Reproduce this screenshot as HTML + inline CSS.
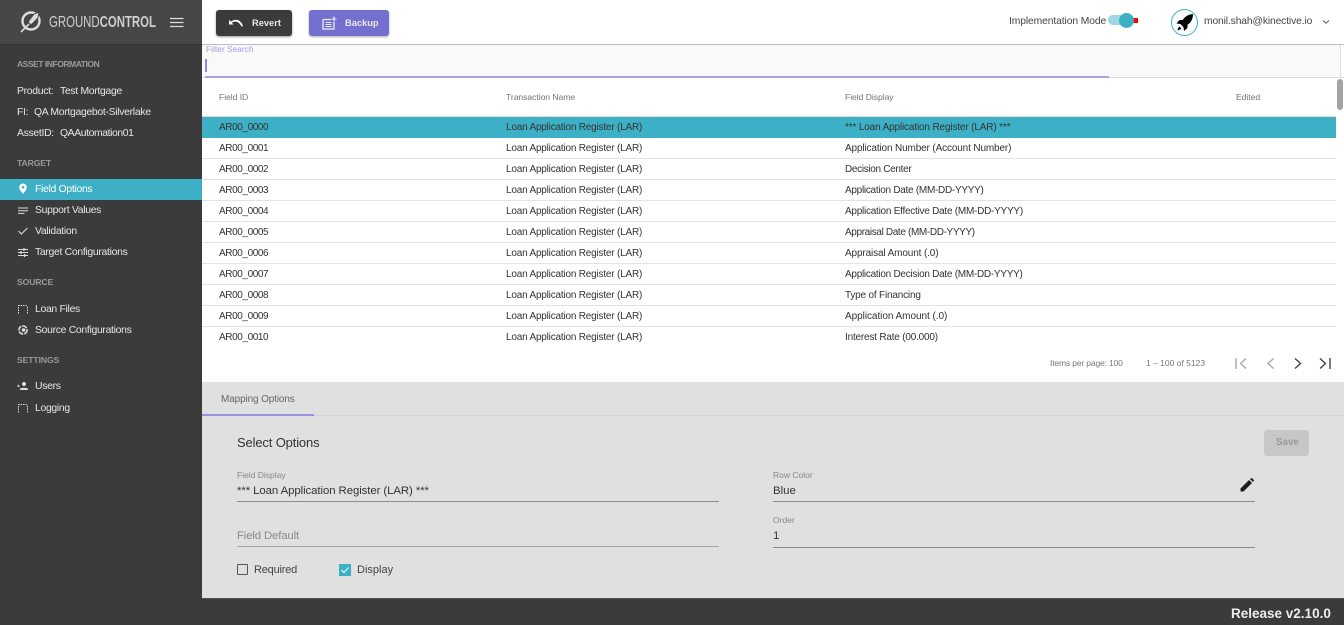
<!DOCTYPE html>
<html><head><meta charset="utf-8"><style>
html,body{margin:0;padding:0;width:1344px;height:625px;overflow:hidden;background:#fff;font-family:"Liberation Sans",sans-serif;color:#333}
.a{position:absolute;white-space:nowrap;line-height:14px}
.s{color:#e6e6e6;font-size:10.4px;letter-spacing:-.3px}
.h{color:#9a9a9a;font-size:8.6px;font-weight:bold;letter-spacing:-.1px}
.r{position:absolute;left:202px;width:1134px;height:20px;border-bottom:1px solid #e3e3e3;font-size:10px;color:#333}
.r span{position:absolute;top:4px;line-height:14px;white-space:nowrap}
.r .c1{left:17px;letter-spacing:-.4px}.r .c2{left:304px;letter-spacing:-.2px}.r .c3{left:643px;letter-spacing:-.25px}
.th{color:#757575;font-size:8.6px;letter-spacing:-.05px}
svg{position:absolute;display:block}
</style></head><body>
<div style="position:absolute;left:0;top:0;width:202px;height:625px;background:#3b3b3b"></div>
<div style="position:absolute;left:0;top:0;width:202px;height:45px;background:#464646;border-bottom:1px solid #333;box-sizing:border-box"></div>
<svg style="left:19px;top:10px" width="24" height="24" viewBox="0 0 24 24" fill="none"><circle cx="12" cy="11" r="8.5" stroke="#ddd" stroke-width="2.4"/><path d="M9 12 L15 4 L20 2 L19 8 L12 15 Z" fill="#ddd" stroke="#464646" stroke-width="1"/><path d="M2 22 L10 14" stroke="#ddd" stroke-width="1.6"/></svg>
<div class="a" style="left:49px;top:16px;font-size:15.5px;color:#cfcfcf;transform-origin:left;transform:scaleX(.735)">GROUND<b>CONTROL</b></div>
<svg style="left:170px;top:17px" width="14" height="12"><path d="M0 1.5H13.5M0 5.5H13.5M0 9.5H13.5" stroke="#ddd" stroke-width="1.2"/></svg>
<div class="a h" style="left:17px;top:57px;letter-spacing:-.52px">ASSET INFORMATION</div>
<div class="a s" style="left:17px;top:85px">Product:</div><div class="a s" style="left:60px;top:85px">Test Mortgage</div>
<div class="a s" style="left:17px;top:106px">FI:</div><div class="a s" style="left:34px;top:106px">QA Mortgagebot-Silverlake</div>
<div class="a s" style="left:17px;top:127px">AssetID:</div><div class="a s" style="left:60px;top:127px;letter-spacing:-.4px">QAAutomation01</div>
<div class="a h" style="left:17px;top:156px">TARGET</div>
<div style="position:absolute;left:0;top:179px;width:202px;height:21px;background:#3eb0c5"></div>
<svg style="left:18px;top:183px" width="10" height="11" viewBox="0 0 10 11"><path d="M5 .5A3.8 3.8 0 0 0 1.2 4.3C1.2 7 5 10.8 5 10.8S8.8 7 8.8 4.3A3.8 3.8 0 0 0 5 .5Z" fill="#fff"/><circle cx="5" cy="4.3" r="1.3" fill="#3eb0c5"/></svg>
<div class="a s" style="left:35px;top:183px;color:#fff">Field Options</div>
<svg style="left:18px;top:207px" width="10" height="8"><path d="M0 1H10M0 3.7H10M0 6.4H6.5" stroke="#ddd" stroke-width="1"/></svg>
<div class="a s" style="left:35px;top:204px">Support Values</div>
<svg style="left:18px;top:227px" width="10" height="8"><path d="M.5 4L3.3 7L9.5 1" stroke="#ddd" stroke-width="1.1" fill="none"/></svg>
<div class="a s" style="left:35px;top:225px">Validation</div>
<svg style="left:18px;top:248px" width="10" height="9"><path d="M0 1.5H10M0 4.5H10M0 7.5H10" stroke="#ddd" stroke-width="1"/><path d="M6 0V3M3 3V6M6.5 6V9" stroke="#ddd" stroke-width="1.3"/></svg>
<div class="a s" style="left:35px;top:246px">Target Configurations</div>
<div class="a h" style="left:17px;top:275px">SOURCE</div>
<svg style="left:18px;top:305px" width="10" height="9"><path d="M.5 8.5V.5H8L9.5 2V8.5" stroke="#ddd" stroke-dasharray="1.5 1" fill="none"/></svg>
<div class="a s" style="left:35px;top:303px">Loan Files</div>
<svg style="left:18px;top:325px" width="10" height="10"><circle cx="5" cy="5" r="4" fill="none" stroke="#ddd" stroke-width="1.6" stroke-dasharray="5 1"/><circle cx="5.5" cy="5" r="1.8" fill="#ddd"/></svg>
<div class="a s" style="left:35px;top:324px">Source Configurations</div>
<div class="a h" style="left:17px;top:353px">SETTINGS</div>
<svg style="left:17px;top:382px" width="11" height="8"><circle cx="7" cy="2" r="2" fill="#ddd"/><path d="M3 8C3 5.5 11 5.5 11 8ZM0 4H3M1.5 2.6V5.4" fill="#ddd" stroke="#ddd" stroke-width=".7"/></svg>
<div class="a s" style="left:35px;top:380px">Users</div>
<svg style="left:18px;top:404px" width="10" height="9"><path d="M.5 8.5V.5H8L9.5 2V8.5" stroke="#ddd" stroke-dasharray="1.5 1" fill="none"/></svg>
<div class="a s" style="left:35px;top:402px">Logging</div>

<div style="position:absolute;left:202px;top:44px;width:1142px;height:1px;background:#bdbdbd"></div>
<div style="position:absolute;left:216px;top:10px;width:76px;height:26px;background:#3b3b3b;border-radius:3px;box-shadow:0 1px 2px #999"></div>
<svg style="left:228px;top:18px" width="16" height="10"><path d="M1 2V6.5H5.5L3.8 4.8C7 2.6 11 3.5 13.5 8.5L15 8C12.8 1.5 7.5 0 2.9 3.6Z" fill="#fff"/></svg>
<div class="a" style="left:252px;top:16px;font-size:9.3px;font-weight:bold;color:#e8e8e8">Revert</div>
<div style="position:absolute;left:309px;top:10px;width:80px;height:26px;background:#7570d0;border-radius:3px;box-shadow:0 1px 2px #aaa"></div>
<svg style="left:322px;top:16px" width="15" height="14"><path d="M1 3.5H9M1 3.5V13H12V6" stroke="#eee" stroke-width="1.3" fill="none"/><path d="M3.5 6.5H9.5M3.5 8.5H9.5M3.5 10.5H9.5M9.5 3H14.5M12 .5V5.5" stroke="#eee" stroke-width="1.1"/></svg>
<div class="a" style="left:345px;top:16px;font-size:9.3px;font-weight:bold;color:#e8e8e8">Backup</div>
<div class="a" style="left:1009px;top:15px;font-size:10.3px;letter-spacing:-.1px;color:#444">Implementation Mode</div>
<div style="position:absolute;left:1108px;top:15px;width:26px;height:10px;border-radius:5px;background:#9ed8e2"></div>
<div style="position:absolute;left:1133px;top:18px;width:5px;height:5px;background:#f00"></div>
<div style="position:absolute;left:1119px;top:13px;width:15px;height:15px;border-radius:50%;background:#3eb0c5"></div>
<div style="position:absolute;left:1171px;top:9px;width:25px;height:25px;border:1.5px solid #3eb0c5;border-radius:50%;background:#fff"></div>
<svg style="left:1175px;top:13px" width="20" height="20" viewBox="0 0 20 20"><path d="M18 1C13 1.3 9.5 4 7.8 7H4.5L1.5 10.5L5.5 11L8.5 14.2L9 18L12.5 15V11.7C15.5 10 18 6.5 18 1Z" fill="#000"/><path d="M4.5 13.5C3 14.5 2.7 16.5 2.5 17.3C3.3 17.2 5.3 17 6.3 15.4Z" fill="#000"/></svg>
<div class="a" style="left:1204px;top:15px;font-size:10.3px;letter-spacing:-.13px;color:#444">monil.shah@kinective.io</div>
<svg style="left:1322px;top:19px" width="8" height="6"><path d="M1 1.5L4 4.2L7 1.5" stroke="#555" fill="none"/></svg>

<div style="position:absolute;left:202px;top:45px;width:1138px;height:32px;background:#f9f9f9;border-right:1px solid #ddd"></div>
<div style="position:absolute;left:202px;top:77px;width:1142px;height:1px;background:#ddd"></div>
<div style="position:absolute;left:205px;top:76px;width:904px;height:1.5px;background:#a8a2e6"></div>
<div style="position:absolute;left:205px;top:59px;width:1.5px;height:13px;background:#8d87dd"></div>
<div class="a" style="left:206px;top:42px;font-size:8.4px;color:#a29de6">Filter Search</div>
<div class="a th" style="left:219px;top:90px">Field ID</div>
<div class="a th" style="left:506px;top:90px">Transaction Name</div>
<div class="a th" style="left:845px;top:90px">Field Display</div>
<div class="a th" style="left:1236px;top:90px">Edited</div>
<div style="position:absolute;left:202px;top:116px;width:1134px;height:1px;background:#ddd"></div>
<div style="position:absolute;left:202px;top:117px;width:1134px;height:229px;overflow:hidden">
<div style="position:relative;left:-202px;top:-117px;height:400px">
<div class="r" style="top:117px;height:21px;background:#3eb0c5;border:0"><span class="c1">AR00_0000</span><span class="c2">Loan Application Register (LAR)</span><span class="c3" style="letter-spacing:-.15px">*** Loan Application Register (LAR) ***</span></div>
<div class="r" style="top:138px"><span class="c1">AR00_0001</span><span class="c2">Loan Application Register (LAR)</span><span class="c3" style="letter-spacing:-.14px">Application Number (Account Number)</span></div>
<div class="r" style="top:159px"><span class="c1">AR00_0002</span><span class="c2">Loan Application Register (LAR)</span><span class="c3" style="letter-spacing:-.32px">Decision Center</span></div>
<div class="r" style="top:180px"><span class="c1">AR00_0003</span><span class="c2">Loan Application Register (LAR)</span><span class="c3" style="letter-spacing:-.28px">Application Date (MM-DD-YYYY)</span></div>
<div class="r" style="top:201px"><span class="c1">AR00_0004</span><span class="c2">Loan Application Register (LAR)</span><span class="c3">Application Effective Date (MM-DD-YYYY)</span></div>
<div class="r" style="top:222px"><span class="c1">AR00_0005</span><span class="c2">Loan Application Register (LAR)</span><span class="c3" style="letter-spacing:-.36px">Appraisal Date (MM-DD-YYYY)</span></div>
<div class="r" style="top:243px"><span class="c1">AR00_0006</span><span class="c2">Loan Application Register (LAR)</span><span class="c3" style="letter-spacing:-.13px">Appraisal Amount (.0)</span></div>
<div class="r" style="top:264px"><span class="c1">AR00_0007</span><span class="c2">Loan Application Register (LAR)</span><span class="c3" style="letter-spacing:-.27px">Application Decision Date (MM-DD-YYYY)</span></div>
<div class="r" style="top:285px"><span class="c1">AR00_0008</span><span class="c2">Loan Application Register (LAR)</span><span class="c3" style="letter-spacing:-.19px">Type of Financing</span></div>
<div class="r" style="top:306px"><span class="c1">AR00_0009</span><span class="c2">Loan Application Register (LAR)</span><span class="c3" style="letter-spacing:-.05px">Application Amount (.0)</span></div>
<div class="r" style="top:327px"><span class="c1">AR00_0010</span><span class="c2">Loan Application Register (LAR)</span><span class="c3" style="letter-spacing:-.2px">Interest Rate (00.000)</span></div>
</div></div>
<div style="position:absolute;left:1337px;top:79px;width:6px;height:31px;border-radius:3px;background:#a3a3a3"></div>
<div class="a" style="left:1050px;top:356px;font-size:8.5px;letter-spacing:-.15px;color:#777">Items per page: 100</div>
<div class="a" style="left:1146px;top:356px;font-size:8.5px;color:#777">1 – 100 of 5123</div>
<svg style="left:1234.5px;top:357px" width="100" height="13" fill="none"><path d="M1 1V12M11 1.5L5.5 6.5L11 11.5" stroke="#a8a8a8" stroke-width="1.4"/><path d="M38.5 1.5L33 6.5L38.5 11.5" stroke="#a8a8a8" stroke-width="1.4"/><path d="M60 1.5L65.5 6.5L60 11.5" stroke="#444" stroke-width="1.4"/><path d="M85 1.5L90.5 6.5L85 11.5M95 1V12" stroke="#444" stroke-width="1.4"/></svg>

<div style="position:absolute;left:202px;top:382px;width:1142px;height:216px;background:#e0e0e0"></div>
<div style="position:absolute;left:202px;top:415px;width:1142px;height:1px;background:#d4d4d4"></div>
<div style="position:absolute;left:202px;top:414px;width:112px;height:2px;background:#9a94e0"></div>
<div class="a" style="left:221px;top:393px;font-size:10px;letter-spacing:-.13px;color:#666">Mapping Options</div>
<div class="a" style="left:237px;top:436px;font-size:13px;letter-spacing:-.15px;color:#333">Select Options</div>
<div style="position:absolute;left:1264px;top:430px;width:45px;height:26px;background:#c7c7c7;border-radius:3px"></div>
<div class="a" style="left:1276px;top:436px;font-size:9.8px;font-weight:bold;color:#999">Save</div>
<div class="a" style="left:237px;top:468px;font-size:8.5px;color:#888">Field Display</div>
<div class="a" style="left:237px;top:484px;font-size:11.4px;letter-spacing:-.08px;color:#333">*** Loan Application Register (LAR) ***</div>
<div style="position:absolute;left:237px;top:501px;width:482px;height:1px;background:#8c8c8c"></div>
<div class="a" style="left:773px;top:468px;font-size:8.5px;color:#888">Row Color</div>
<div class="a" style="left:773px;top:484px;font-size:11.4px;color:#333">Blue</div>
<svg style="left:1240px;top:478px" width="14" height="14" viewBox="0 0 14 14"><path d="M.5 13.5V10.5L9 2L12 5L3.5 13.5ZM10 1L11 0.3C11.4 0 11.8 0 12.2.3L13.7 1.8C14 2.2 14 2.6 13.7 3L13 4Z" fill="#1c1c1c"/></svg>
<div style="position:absolute;left:773px;top:501px;width:482px;height:1px;background:#8c8c8c"></div>
<div class="a" style="left:237px;top:529px;font-size:11.4px;letter-spacing:-.15px;color:#8a8a8a">Field Default</div>
<div style="position:absolute;left:237px;top:546px;width:482px;height:1px;background:#a5a5a5"></div>
<div class="a" style="left:773px;top:513px;font-size:8.5px;color:#888">Order</div>
<div class="a" style="left:773px;top:529px;font-size:11.4px;color:#333">1</div>
<div style="position:absolute;left:773px;top:547px;width:482px;height:1px;background:#8c8c8c"></div>
<div style="position:absolute;left:237px;top:564px;width:9px;height:9px;border:1.5px solid #555;border-radius:1px"></div>
<div class="a" style="left:254px;top:563px;font-size:11px;letter-spacing:-.2px;color:#444">Required</div>
<div style="position:absolute;left:339px;top:564px;width:12px;height:12px;background:#3eb0c5"></div>
<svg style="left:339px;top:564px" width="12" height="12"><path d="M2.5 6L5 8.5L9.5 3.5" stroke="#e8f5f8" stroke-width="1.2" fill="none"/></svg>
<div class="a" style="left:357px;top:563px;font-size:11px;color:#444">Display</div>
<div style="position:absolute;left:202px;top:598px;width:1142px;height:27px;background:#3b3b3b;border-top:1px solid #555;box-sizing:border-box"></div>
<div class="a" style="left:1231px;top:607px;font-size:13.5px;font-weight:bold;color:#eee">Release v2.10.0</div>
</body></html>
